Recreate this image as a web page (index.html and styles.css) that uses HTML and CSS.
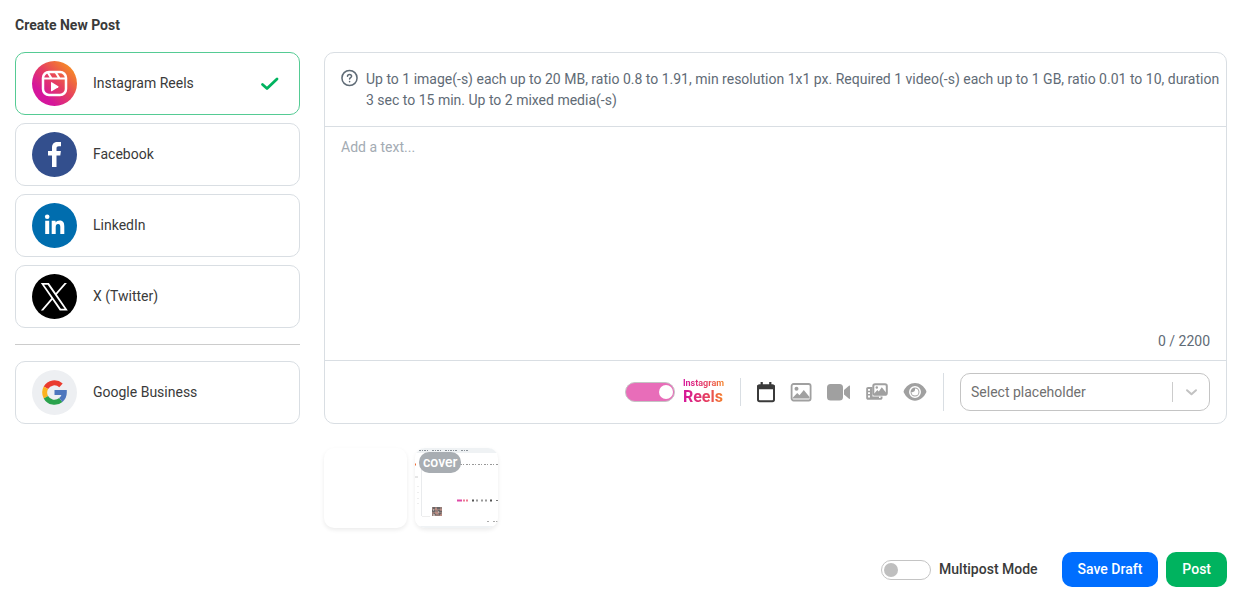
FILE: index.html
```html
<!DOCTYPE html>
<html lang="en">
<head>
<meta charset="utf-8">
<meta name="viewport" content="width=device-width, initial-scale=1">
<title>Create New Post</title>
<link rel="stylesheet" href="styles.css">
</head>
<body>
<main class="page">
  <h1 class="title">Create New Post</h1>
  <div class="layout">
    <nav class="networks" aria-label="Networks">
      <button class="network network-active" type="button" aria-pressed="true">
        <svg class="network-logo" viewBox="0 0 45 45" aria-hidden="true">
          <defs><linearGradient id="reels" x1="0.15" y1="0.85" x2="0.85" y2="0.15"><stop offset="0.15" stop-color="#d5169c"/><stop offset="0.55" stop-color="#e6405f"/><stop offset="1" stop-color="#f58529"/></linearGradient></defs>
          <circle cx="22.500" cy="22.500" r="22.500" fill="url(#reels)"/>
          <rect x="11" y="11" width="23" height="23" rx="6" fill="none" stroke="#fff" stroke-width="2.500"/>
          <path d="M11 17.500h23M15.500 11l4 6.500M23.500 11l4 6.500" fill="none" stroke="#fff" stroke-width="2.200"/>
          <path d="M19 21.700v8c0 .5.400.700.800.500l6.500-4c.4-.3.400-.7 0-1l-6.500-4c-.4-.2-.8 0-.8.500z" fill="#fff"/>
        </svg>
        <span class="network-name">Instagram Reels</span>
        <svg class="check" viewBox="0 0 20 14" aria-hidden="true"><path d="M2.500 7.500l4.500 4L17 2" fill="none" stroke="#00b35f" stroke-width="2.800" stroke-linecap="round" stroke-linejoin="round"/></svg>
      </button>
      <button class="network" type="button" aria-pressed="false">
        <svg class="network-logo" viewBox="0 0 45 45" aria-hidden="true"><circle cx="22.500" cy="22.500" r="22.500" fill="#334f8d"/><path d="M20 35V23.500h-4V19h4v-3.500c0-3.700 2.200-5.500 5.600-5.500H29v4.200h-2.200c-1.700 0-2.300.8-2.300 2.200V19h4.400l-.6 4.500h-3.800V35z" fill="#fff"/></svg>
        <span class="network-name">Facebook</span>
      </button>
      <button class="network" type="button" aria-pressed="false">
        <svg class="network-logo" viewBox="0 0 45 45" aria-hidden="true"><circle cx="22.500" cy="22.500" r="22.500" fill="#006dae"/><circle cx="15.200" cy="13.800" r="2.300" fill="#fff"/><path d="M13.200 17.700h4V31h-4zM19.700 17.700h3.900v1.800c.7-1.200 2-2.100 4-2.100 3.800 0 4.700 2.600 4.700 6V31h-4v-6.700c0-1.800-.2-3.300-2.200-3.300s-2.400 1.500-2.400 3.300V31h-4z" fill="#fff"/></svg>
        <span class="network-name">LinkedIn</span>
      </button>
      <button class="network" type="button" aria-pressed="false">
        <svg class="network-logo" viewBox="0 0 45 45" aria-hidden="true"><circle cx="22.500" cy="22.500" r="22.500" fill="#000"/><g transform="translate(8.800 8.900) scale(0.0225)"><path d="M714.163 519.284L1160.890 0H1055.030L667.137 450.887L357.328 0H0L468.492 681.821L0 1226.370H105.866L515.491 750.218L842.672 1226.370H1200L714.137 519.284ZM144.011 79.694H306.615L1055.080 1150.300H892.476Z" fill="#fff" fill-rule="evenodd"/></g></svg>
        <span class="network-name">X (Twitter)</span>
      </button>
      <hr class="divider">
      <button class="network" type="button" aria-pressed="false">
        <svg class="network-logo" viewBox="0 0 45 45" aria-hidden="true"><circle cx="22.500" cy="22.500" r="22.500" fill="#edeff2"/><g fill="none" stroke-width="5"><path d="M29 15.400A9.800 9.800 0 0 0 13.900 17.800" stroke="#ea3b2e"/><path d="M13.900 17.800A9.800 9.800 0 0 0 13.900 27.200" stroke="#fbb220"/><path d="M13.900 27.200A9.800 9.800 0 0 0 28.800 30" stroke="#2aa24c"/><path d="M28.800 30A9.800 9.800 0 0 0 32.300 22.500H22.500" stroke="#4d76be"/></g></svg>
        <span class="network-name">Google Business</span>
      </button>
    </nav>

    <section class="content">
      <div class="editor">
        <div class="hint">
          <svg class="hint-icon" viewBox="0 0 18 18" fill="none" stroke="#5f6b76" stroke-width="1.600" stroke-linecap="round" aria-hidden="true"><circle cx="9" cy="9" r="8"/><path d="M6.900 7.200c0-1.300.9-2 2.100-2s2.200.8 2.200 1.900c0 1.500-2.100 1.600-2.100 3"/><path d="M9.100 12.800v.1"/></svg>
          <p class="hint-text">Up to 1 image(-s) each up to 20 MB, ratio 0.8 to 1.91, min resolution 1x1 px. Required 1 video(-s) each up to 1 GB, ratio 0.01 to 10, duration 3 sec to 15 min. Up to 2 mixed media(-s)</p>
        </div>
        <textarea class="post-text" aria-label="Post text" placeholder="Add a text..."></textarea>
        <p class="counter">0 / 2200</p>
        <div class="toolbar">
          <label class="reels-mode">
            <input class="switch switch-reels" type="checkbox" role="switch" checked>
            <span class="reels-label"><span class="reels-brand">Instagram</span><span class="reels-name">Reels</span></span>
          </label>
          <span class="separator separator-short"></span>
          <div class="tools">
            <button class="tool tool-dark" type="button" aria-label="Schedule"><svg class="tool-icon tool-icon-narrow" viewBox="3 0 18 24" aria-hidden="true"><rect x="4" y="5.200" width="16" height="16" rx="1.600" fill="none" stroke="currentColor" stroke-width="2"/><path d="M3 5.500h18V9.200H3zM6.600 2h2.200v4H6.600zM15.200 2h2.200v4h-2.200z" fill="currentColor"/></svg></button>
            <button class="tool" type="button" aria-label="Add image"><svg class="tool-icon" viewBox="0 0 24 24" aria-hidden="true"><rect x="2.600" y="4" width="19" height="16.500" rx="2" fill="none" stroke="currentColor" stroke-width="1.800"/><circle cx="7.500" cy="8.800" r="2" fill="currentColor"/><path d="M3.500 18l4.700-5 2.300 2.300 4.300-5.300 5.700 7v1.500h-17z" fill="currentColor"/></svg></button>
            <button class="tool" type="button" aria-label="Add video"><svg class="tool-icon" viewBox="0 0 24 24" aria-hidden="true"><rect x="0" y="4" width="16" height="16.500" rx="3.500" fill="currentColor"/><path d="M17 10l5-4.200c.5-.4 1-.2 1 .5v12c0 .7-.5.900-1 .5l-5-4.200z" fill="currentColor"/></svg></button>
            <button class="tool" type="button" aria-label="Add mixed media"><svg class="tool-icon" viewBox="0 0 24 24" aria-hidden="true"><path d="M3 7h4.500v12.800H3c-1 0-1.800-.8-1.800-1.800V8.800C1.200 7.800 2 7 3 7zM7 16.500h10.500V18c0 1-.8 1.800-1.800 1.800H7z" fill="currentColor"/><path d="M3 9h2v1.800H3zM3 12.300h2v1.800H3zM3 15.600h2v1.800H3zM14 16.500h1.600v1.600H14z" fill="#fff"/><rect x="8.300" y="4.300" width="13.500" height="10.400" rx="1.800" fill="#fff" stroke="currentColor" stroke-width="2"/><circle cx="11.800" cy="7.500" r="1.200" fill="currentColor"/><path d="M9.300 13.500l3-3.500 1.500 1.400 3-4.200 4.200 5.200v1.600H9.300z" fill="currentColor"/></svg></button>
            <button class="tool" type="button" aria-label="Preview"><svg class="tool-icon" viewBox="0 0 24 24" aria-hidden="true"><path d="M12 3C7 3 2.900 6.300.8 10.700c-.3.600-.3 1.200 0 1.800C2.900 16.900 7 20.800 12 20.800s9.100-3.900 11.200-8.300c.3-.6.300-1.200 0-1.800C21.100 6.300 17 3 12 3z" fill="currentColor"/><circle cx="12" cy="12" r="5.200" fill="none" stroke="#fff" stroke-width="1.500"/><path d="M12 8.500a3.500 3.500 0 1 1-3.500 3.500c2 .6 4-.9 3.500-3.500z" fill="#fff"/></svg></button>
          </div>
          <span class="separator"></span>
          <div class="placeholder-picker">
            <select class="placeholder-select" aria-label="Placeholder"><option>Select placeholder</option></select>
            <span class="select-end"><svg class="chevron" viewBox="0 0 14 14" fill="none" stroke="#c2c2c2" stroke-width="2" stroke-linecap="round" stroke-linejoin="round" aria-hidden="true"><path d="M2 5.200l4.500 4 4.500-4"/></svg></span>
          </div>
        </div>
      </div>

      <div class="attachments">
        <div class="thumb"></div>
        <div class="thumb">
          <svg class="thumb-image" viewBox="0 0 83 80" aria-hidden="true">
            <path d="M0 0h83v6H6v73H0z" fill="#fff"/><path d="M0 0h83v5H0zM0 78h83v2H0z" fill="#eff2f4"/><path d="M6.500 18v50" stroke="#e9ebed"/>
            <path d="M4 2.500h10M17 2.500h9M30 2.500h12M46 2.500h8" stroke="#8b9299" stroke-dasharray="2 1 1 1"/>
            <path d="M45 16.500h38" stroke="#999" stroke-dasharray="2 1 1 2"/>
            <path d="M0 16.500h1" stroke="#f16b31" stroke-width="2"/><path d="M0 29h3" stroke="#ccc"/>
            <path d="M3 38v1M3 44v1M3 50v1M3 55v1" stroke="#ddd"/>
            <path d="M42 52.500h5" stroke="#df49a8" stroke-width="2"/><path d="M48 52.500h5" stroke="#ed7b92" stroke-width="2" stroke-dasharray="2 1"/>
            <path d="M57 52.500h2M75 52.500h2" stroke="#555" stroke-width="2"/><path d="M61 52.500h2M66 52.500h2M70 52.500h2" stroke="#999" stroke-width="2"/><path d="M81 52.500h2" stroke="#777"/>
            <rect x="17" y="59" width="10" height="9" fill="#967e79"/><path d="M18 60h2m2 0h3M17 63h3m3 0h4M19 66h2m3 0h2" stroke="#3f5158"/><path d="M20 61h2m3 1h2M20 65h3m2 2h2" stroke="#db9a8e"/><path d="M18 62h1m4 2h1M18 67h2" stroke="#e3e2dd"/>
            <path d="M7 68.500h8" stroke="#eee"/><path d="M72 73.500h3M78 73.500h5" stroke="#aaa" stroke-dasharray="2 1"/>
          </svg>
          <span class="cover-badge">cover</span>
        </div>
      </div>

      <div class="actions">
        <label class="multipost"><input class="switch" type="checkbox" role="switch"><span>Multipost Mode</span></label>
        <div class="action-buttons">
          <button class="button button-draft" type="button">Save Draft</button>
          <button class="button button-post" type="button">Post</button>
        </div>
      </div>
    </section>
  </div>
</main>
</body>
</html>
```
FILE: styles.css
```css
* {
  box-sizing: border-box;
}

body {
  margin: 0;
  background: #fff;
  color: #3a3a3a;
  font-family: Roboto, "Liberation Sans", sans-serif;
  font-size: 14px;
  line-height: 21px;
}

button,
select,
textarea {
  font: inherit;
  color: inherit;
}

button {
  cursor: pointer;
}

svg {
  display: block;
  flex: none;
}

.page {
  padding: 15px;
}

.title {
  margin: 0 0 16px;
  font-size: 14px;
  font-weight: 700;
}

.layout {
  display: flex;
  align-items: flex-start;
  gap: 24px;
}

.networks {
  display: flex;
  flex: 0 0 285px;
  flex-direction: column;
  gap: 8px;
}

.network {
  display: flex;
  align-items: center;
  gap: 16px;
  padding: 8px 16px;
  border: 1px solid #d9dee3;
  border-radius: 10px;
  background: #fff;
  text-align: left;
}

.network-active {
  border-color: #55cb94;
}

.network-logo {
  width: 45px;
  height: 45px;
}

.network-name {
  flex: 1;
}

.check {
  width: 20px;
  height: 14px;
  margin-right: 3px;
}

.divider {
  width: 100%;
  margin: 8px 0;
  border: 0;
  border-top: 1px solid #ccc;
}

.content {
  flex: 1;
  min-width: 0;
}

.editor {
  display: flex;
  flex-direction: column;
  border: 1px solid #d9dee3;
  border-radius: 10px;
  background: #fff;
}

.hint {
  display: flex;
  align-items: flex-start;
  gap: 8px;
  padding: 16px 4px 15px 16px;
  border-bottom: 1px solid #d9dee3;
  color: #5f6b76;
}

.hint-icon {
  width: 17px;
  height: 18px;
}

.hint-text {
  margin: 0;
}

.post-text {
  display: block;
  width: 100%;
  height: 192px;
  padding: 10px 16px;
  border: 0;
  outline: 0;
  background: transparent;
  resize: none;
}

.post-text::placeholder {
  color: #a3abb3;
  opacity: 1;
}

.counter {
  margin: 0;
  padding: 12px 16px 8px;
  color: #5f6b76;
  text-align: right;
}

.toolbar {
  display: flex;
  align-items: center;
  justify-content: flex-end;
  gap: 16px;
  padding: 12px 16px;
  border-top: 1px solid #d9dee3;
}

.reels-mode,
.multipost {
  display: flex;
  align-items: center;
  gap: 8px;
}

.switch {
  display: flex;
  flex: none;
  align-items: center;
  width: 50px;
  height: 20px;
  margin: 0;
  padding: 2px;
  border: 1px solid #c4c4c4;
  border-radius: 10px;
  appearance: none;
  background: #fff;
}

.switch::before {
  width: 14px;
  height: 14px;
  border-radius: 50%;
  background: #bfbfbf;
  content: "";
}

.switch:checked {
  justify-content: flex-end;
  padding-right: 1px;
  background: #e86db9;
}

.switch:checked::before {
  background: #fff;
}

.reels-label {
  display: flex;
  flex-direction: column;
  background: linear-gradient(90deg, #d5169c, #e6405f 60%, #f58529);
  background-clip: text;
  color: transparent;
  font-weight: 700;
}

.reels-brand {
  font-size: 9px;
  line-height: 10px;
}

.reels-name {
  font-size: 16px;
  line-height: 18px;
}

.separator {
  align-self: stretch;
  width: 1px;
  background: #d9dee3;
}

.separator-short {
  margin: 5px 0;
}

.tools {
  display: flex;
  align-items: center;
  gap: 14px;
}

.tool {
  padding: 0;
  border: 0;
  background: none;
  color: #a0a0a0;
}

.tool-dark {
  color: #3a3a3a;
}

.tool-icon {
  width: 24px;
  height: 24px;
}

.tool-icon-narrow {
  width: 18px;
}

.placeholder-picker {
  position: relative;
  width: 250px;
}

.placeholder-select {
  display: block;
  width: 100%;
  height: 38px;
  padding: 0 40px 0 10px;
  border: 1px solid #c4c4c4;
  border-radius: 10px;
  appearance: none;
  background: #fff;
  color: #707070;
}

.select-end {
  position: absolute;
  top: 9px;
  right: 0;
  display: flex;
  align-items: center;
  justify-content: center;
  width: 38px;
  height: 20px;
  border-left: 1px solid #ccc;
  pointer-events: none;
}

.chevron {
  width: 14px;
  height: 14px;
}

.attachments {
  display: flex;
  gap: 8px;
  margin-top: 24px;
}

.thumb {
  position: relative;
  overflow: hidden;
  width: 83px;
  height: 80px;
  border-radius: 10px;
  background: #fff;
  box-shadow: 0 2px 4px rgba(0, 0, 0, 0.08);
}

.thumb-image {
  width: 100%;
  height: 100%;
}

.cover-badge {
  position: absolute;
  top: 4px;
  left: 4px;
  padding: 0 4px;
  border-radius: 10px;
  background: #a8adb2;
  color: #fff;
  font-weight: 500;
}

.actions {
  display: flex;
  align-items: center;
  justify-content: flex-end;
  gap: 24px;
  margin-top: 24px;
}

.multipost {
  font-weight: 500;
}

.action-buttons {
  display: flex;
  gap: 8px;
}

.button {
  padding: 7px 16px;
  border: 0;
  border-radius: 10px;
  color: #fff;
  font-weight: 500;
}

.button-draft {
  background: #006eff;
}

.button-post {
  background: #00b35f;
}
```
